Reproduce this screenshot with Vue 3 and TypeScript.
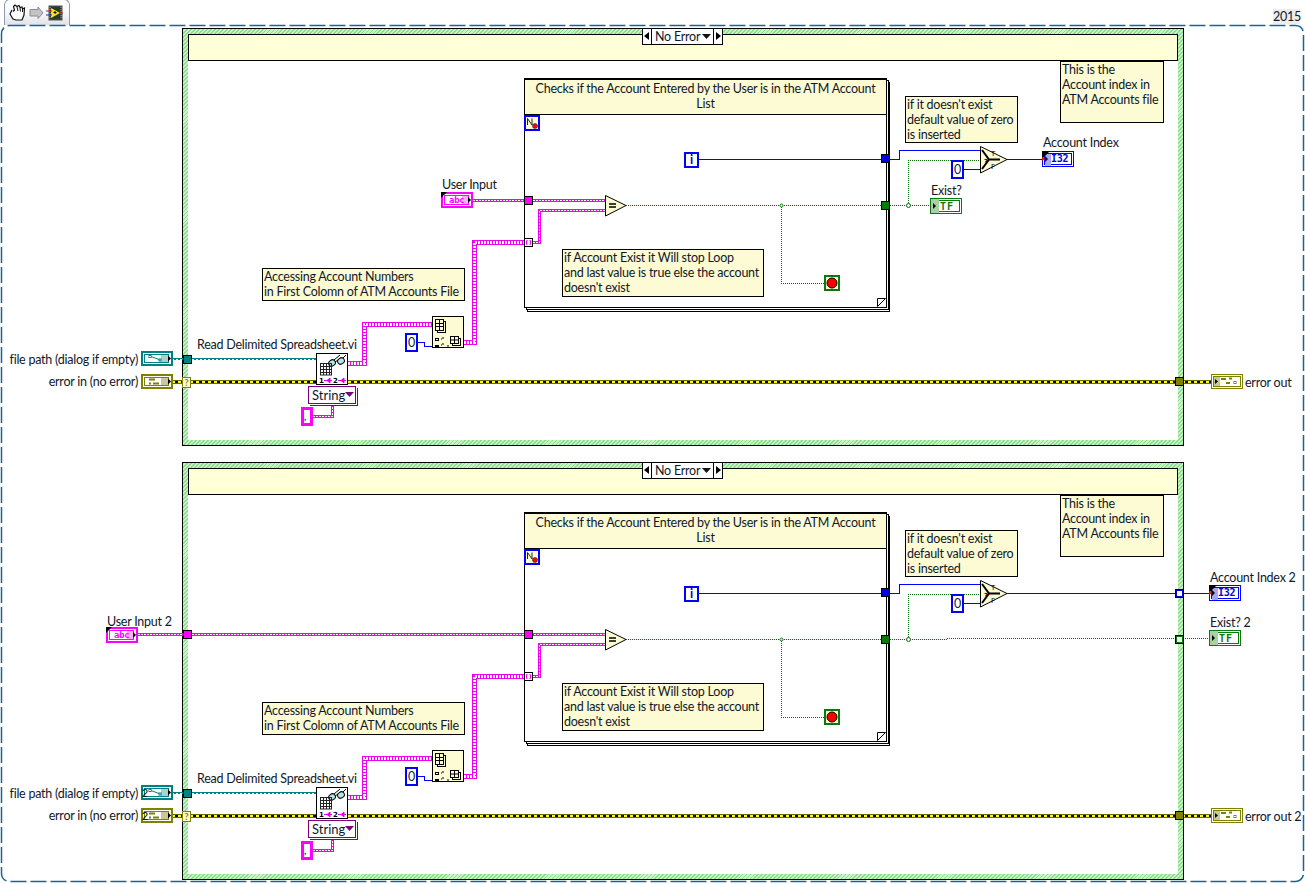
<template>
  <div class="page">
    <!-- toolbar tab -->
    <div class="tab">
      <svg width="66" height="25" viewBox="0 0 66 25">
        <path d="M8 10 L6 14 L9 19 L12 20 L18 20 L20 15 L20.5 8 L18.5 9 L18 7 L16 7.5 L15 5.5 L13 6.5 L11 5 L9.5 6.5 L10.5 10 L9 11.5" fill="#fff" stroke="#111" stroke-width="1.2" />
        <path d="M13 7 L14 11 M16 8 L16.5 11.5 M18.500 9 L18.500 12" stroke="#111" fill="none" />
        <path d="M26 9.500 H34 V7 L39 13 L34 18.500 V16 H26 Z" fill="#c4c4c4" stroke="#8c8c8c" />
        <rect x="45" y="6" width="13" height="14" fill="#2a3a2a" stroke="#555" />
        <path d="M46 7 V19 M57 7 V19" stroke="#aaa" stroke-dasharray="1 1" />
        <path d="M47 8 L56 13 L47 18 Z" fill="#f7e31d" />
        <path d="M42 11 H48 M55 13 H59" stroke="#d81818" />
        <path d="M42 15 H48" stroke="#1830d8" />
        <path d="M51 11 V14 M49.500 12.500 H52.500" stroke="#111" />
      </svg>
    </div>
    <div class="year">2015</div>

    <!-- dashed diagram border -->
    <svg class="bounds" width="1305" height="884">
      <rect x="1.5" y="25.500" width="1302" height="856" rx="8" fill="none" stroke="#1b6394" stroke-width="1.5" stroke-dasharray="16 4" />
    </svg>

    <div v-for="c in cases" :key="c.id" class="case" :class="'case-' + c.id">
      <!-- case structure frame -->
      <div class="frame"></div>
      <div class="band"></div>
      <div class="selector">
        <span class="sel-arrow">
          <svg width="8" height="14"><path d="M6 3 V11 L1 7 Z" fill="#000" /></svg>
        </span>
        <span class="sel-text">No Error</span>
        <svg class="sel-drop" width="9" height="6"><path d="M0 0 H9 L4.500 5 Z" fill="#111" /></svg>
        <span class="sel-arrow sel-arrow-right">
          <svg width="8" height="14"><path d="M2 3 V11 L7 7 Z" fill="#000" /></svg>
        </span>
      </div>

      <!-- while loop -->
      <div class="loop-back loop-back-2"></div>
      <div class="loop-back loop-back-1"></div>
      <div class="loop">
        <div class="loop-note">Checks if the Account Entered by the User is in the ATM Account<br />List</div>
      </div>
      <svg class="curl" width="9" height="9"><path d="M.5 .5 H8.500 L.5 8.500 Z" fill="#fff" stroke="#000" /></svg>

      <!-- wires -->
      <svg class="wires" width="1305" height="450">
        <g v-for="(w, i) in c.wires" :key="i" fill="none" shape-rendering="crispEdges">
          <path :d="w.d" :class="'wire-' + w.kind" />
          <path v-if="hasInner(w.kind)" :d="w.d" :class="'inner-' + w.kind" />
          <path v-if="w.kind === 'err'" :d="w.d" class="inner-err-2" />
        </g>
        <circle cx="781.500" cy="205.500" r="1.500" fill="#fff" stroke="#0b6b0b" />
        <circle cx="908.500" cy="205.500" r="2" fill="#fff" stroke="#0b6b0b" />
      </svg>

      <!-- comments -->
      <div class="note note-exist">if it doesn't exist<br />default value of zero<br />is inserted</div>
      <div class="note note-index">This is the<br />Account index in<br />ATM Accounts file</div>
      <div class="note note-stop">if Account Exist it Will stop Loop<br />and last value is true else the account<br />doesn't exist</div>
      <div class="note note-column">Accessing Account Numbers<br />in First Colomn of ATM Accounts File</div>

      <!-- loop terminals and primitives -->
      <svg class="node cond-n" width="16" height="16">
        <rect x="1" y="1" width="14" height="14" fill="#fdfbd3" stroke="#0000ff" stroke-width="2" />
        <path d="M3.500 10 V3.500 L8 10 V3.500" fill="none" stroke="#223" />
        <circle cx="11" cy="11" r="2.500" fill="#f00" stroke="#333" stroke-width=".6" />
      </svg>
      <div class="const-i">i</div>
      <svg class="node prim-eq" width="22" height="22">
        <path d="M.5 .5 L21 10.500 L.5 21 Z" fill="#fdfbd3" stroke="#000" />
        <path d="M4 9 H11 M4 12 H11" stroke="#000" stroke-width="1.500" />
      </svg>
      <svg class="node prim-sel" width="28" height="28">
        <path d="M.5 .5 L27 13.500 L.5 27 Z" fill="#fdfbd3" stroke="#000" />
        <path d="M2 4 L9 13.500 L2 23 M9 13.500 H20" fill="none" stroke="#000" stroke-width="2" />
        <text x="4" y="18" class="tiny bold">?</text>
        <text x="11" y="10" class="tiny">T</text>
        <text x="11" y="23" class="tiny">F</text>
      </svg>
      <div class="const-num num-sel">0</div>
      <svg class="node stop" width="16" height="16">
        <rect x="1" y="1" width="14" height="14" fill="#fdfbd3" stroke="#0a7a0a" stroke-width="2" />
        <circle cx="8" cy="8" r="5" fill="#f00" stroke="#000" />
      </svg>

      <!-- tunnels -->
      <div class="tunnel t-str-in"></div>
      <svg class="node t-idx" width="9" height="9">
        <rect x=".5" y=".5" width="8" height="8" fill="#fff" stroke="#000" />
        <path d="M3.500 2.500 H2.500 V6.500 H3.500 M5.500 2.500 H6.500 V6.500 H5.500" fill="none" stroke="#f0f" />
      </svg>
      <div class="tunnel t-i32-out"></div>
      <div class="tunnel t-bool-out"></div>
      <div v-if="c.id === 2" class="tunnel t-str-case"></div>
      <div v-if="c.id === 2" class="tunnel t-i32-case"></div>
      <div v-if="c.id === 2" class="tunnel t-bool-case"></div>
      <div class="tunnel t-path"></div>
      <div class="t-err-in">?</div>
      <div class="tunnel t-err-out"></div>

      <!-- read spreadsheet and index array -->
      <svg class="node read-vi" width="32" height="32">
        <rect x=".5" y=".5" width="31" height="31" fill="#fff" stroke="#000" />
        <g fill="#b6e4e4" stroke="#000">
          <ellipse cx="16" cy="10" rx="3.500" ry="3" transform="rotate(-35 16 10)" />
          <ellipse cx="25" cy="8" rx="3.500" ry="3" transform="rotate(-35 25 8)" />
        </g>
        <path d="M18 7 L24 2 M27 5 L30 2 M19 9 L22 7" stroke="#000" fill="none" />
        <path d="M4 10.500 H16 M4 13.500 H16 M4 16.500 H16 M4 19.500 H16 M4 22 H16 M4.500 10 V22 M7.500 10 V22 M10.500 10 V22 M13.500 10 V22 M15.500 10 V22" stroke="#222" fill="none" />
        <text x="3" y="30" class="tiny bold">1</text>
        <path d="M8 27.500 H16 M14 25 V30 L11 27.500 Z" stroke="#e000e0" fill="#e000e0" />
        <text x="17" y="30" class="tiny bold">2</text>
        <path d="M22 27.500 H30 M28 25 V30 L25 27.500 Z" stroke="#e000e0" fill="#e000e0" />
      </svg>
      <svg class="node idx-vi" width="32" height="32">
        <rect x=".5" y=".5" width="31" height="31" fill="#fdfbd3" stroke="#000" />
        <g fill="none" stroke="#000">
          <rect x="5.500" y="5.500" width="8" height="11" fill="#fdfbd3" />
          <rect x="3.500" y="3.500" width="8" height="11" fill="#fdfbd3" />
          <path d="M3.500 7.500 H11.500 M3.500 10.500 H11.500 M7.500 3.500 V14.500" />
          <rect x="20.500" y="22.500" width="8" height="7" fill="#fdfbd3" />
          <rect x="18.500" y="20.500" width="8" height="7" fill="#fdfbd3" />
          <path d="M18.500 24 H26.500 M22.500 20.500 V27.500" />
          <rect x="3.500" y="22.500" width="3" height="2" />
        </g>
        <rect x="3" y="29" width="4" height="2" fill="#000" />
        <path d="M9 23 H10 M11 21 V23 M9 29 H10 M11 27 V29 M16 31 V29" stroke="#000" />
      </svg>
      <div class="const-num num-idx">0</div>
      <div class="ring">
        <span>String</span>
        <svg width="9" height="6"><path d="M0 0 H9 L4.500 5 Z" fill="#800080" /></svg>
      </div>
      <div class="const-str"><span>,</span></div>

      <!-- front panel terminals -->
      <svg class="node term-path" width="32" height="15">
        <rect x="1" y="1" width="30" height="13" fill="#fff" stroke="#008080" stroke-width="2" />
        <rect x="3.500" y="3.500" width="24" height="8" fill="#fff" stroke="#008080" />
        <rect x="20" y="4" width="7" height="7" fill="#a6d2d2" />
        <path d="M27 4.500 L30 7.500 L27 10.500 Z" fill="#000" />
        <path d="M10 5.500 L18 8.500" stroke="#008080" fill="none" />
        <rect x="8" y="4.500" width="2" height="2" fill="none" stroke="#008080" />
        <rect x="18" y="8" width="2" height="2" fill="none" stroke="#008080" />
        <text v-if="c.id === 2" x="1" y="12" class="req">2</text>
      </svg>
      <svg class="node term-err" width="32" height="15">
        <rect x="1" y="1" width="30" height="13" fill="#fff" stroke="#7f7f00" stroke-width="2" />
        <rect x="3.500" y="3.500" width="24" height="8" fill="#fff" stroke="#7f7f00" />
        <rect x="20" y="4" width="7" height="7" fill="#c8c89a" />
        <path d="M27 4.500 L30 7.500 L27 10.500 Z" fill="#000" />
        <path d="M8 5.500 H14 M8 9.500 H10 M12 9.500 H18" stroke="#7f7f00" stroke-width="2" fill="none" />
        <text v-if="c.id === 2" x="1" y="12" class="req">2</text>
      </svg>
      <svg class="node term-err-out" width="32" height="15">
        <rect x=".5" y=".5" width="31" height="14" fill="#fff" stroke="#7f7f00" />
        <rect x="2.500" y="2.500" width="27" height="10" fill="#fff" stroke="#7f7f00" />
        <rect x="3" y="3" width="6" height="9" fill="#c8c89a" />
        <path d="M4 5 L7 7.500 L4 10 Z" fill="#000" />
        <path d="M10 5 H15 M18 4.500 H21 M15 9 H19" stroke="#7f7f00" stroke-width="2" fill="none" />
        <rect x="23" y="7.500" width="2" height="2" fill="none" stroke="#7f7f00" />
      </svg>
      <svg class="node term-str" :class="{ 'term-str-2': c.id === 2 }" width="32" height="16">
        <rect x="1" y="1" width="30" height="14" fill="#fff" stroke="#f0f" stroke-width="2" />
        <rect x="3.500" y="3.500" width="24" height="9" fill="#fff" stroke="#f0f" />
        <rect x="21" y="4" width="6" height="8" fill="#fbb0fb" />
        <path d="M27 5 L30 8 L27 11 Z" fill="#000" />
        <path d="M0 0 H6 L0 6 Z" fill="#000" />
        <text x="8" y="11" class="abc">abc</text>
      </svg>
      <svg class="node term-i32" :class="{ 'term-i32-2': c.id === 2 }" width="32" height="16">
        <rect x=".5" y=".5" width="31" height="15" fill="#fff" stroke="#0000ff" />
        <rect x="2.500" y="2.500" width="27" height="11" fill="#fff" stroke="#0000ff" />
        <rect x="3" y="3" width="6" height="12" fill="#a8a8f0" />
        <path d="M0 0 H8 L0 8 Z" fill="#000" />
        <path d="M0 6 L3 8 L0 10 Z" fill="#f00" />
        <path d="M3 5 L6 8 L3 11 Z" fill="#000" />
        <text x="9" y="11" class="i32">I32</text>
      </svg>
      <svg class="node term-tf" :class="{ 'term-tf-2': c.id === 2 }" width="32" height="16">
        <rect x=".5" y=".5" width="31" height="15" fill="#fff" stroke="#0a7a0a" />
        <rect x="2.500" y="2.500" width="27" height="11" fill="#fff" stroke="#0a7a0a" />
        <rect x="1" y="1" width="8" height="14" fill="#a8d0a8" />
        <path d="M3 5 L6 8 L3 11 Z" fill="#000" />
        <text x="10" y="11.500" class="tf">TF</text>
      </svg>

      <!-- labels -->
      <span class="label l-user" :class="{ 'l-user-2': c.id === 2 }">{{ c.userLabel }}</span>
      <span class="label l-read">Read Delimited Spreadsheet.vi</span>
      <span class="label l-file">file path (dialog if empty)</span>
      <span class="label l-errin">error in (no error)</span>
      <span class="label l-errout">{{ c.errLabel }}</span>
      <span class="label l-acct" :class="{ 'l-acct-2': c.id === 2 }">{{ c.acctLabel }}</span>
      <span class="label l-exist" :class="{ 'l-exist-2': c.id === 2 }">{{ c.existLabel }}</span>
    </div>
  </div>
</template>

<script setup lang="ts">
type Wire = { kind: 'str' | 'arr' | 'path' | 'err' | 'i32' | 'bool'; d: string };

// wires drawn the same in both case structures
const common: Wire[] = [
  { kind: 'i32', d: 'M698 159.500 H881' },
  { kind: 'i32', d: 'M890 159.500 H899.500 V150.500 H980' },
  { kind: 'i32', d: 'M964 169.500 H980' },
  { kind: 'i32', d: 'M417 342.500 H424.500 V346.500 H432' },
  { kind: 'bool', d: 'M626 205.500 H881' },
  { kind: 'bool', d: 'M781.500 205 V283.500 H824' },
  { kind: 'bool', d: 'M908.500 205 V160.500 H980' },
  { kind: 'str', d: 'M533 242.500 H539.500 V210.500 H605' },
  { kind: 'arr', d: 'M348 363.500 H364.500 V324.500 H432' },
  { kind: 'arr', d: 'M464 342.500 H474.500 V242.500 H524' },
  { kind: 'str', d: 'M313 416.500 H332.500 V406' },
  { kind: 'path', d: 'M172 359 H316' },
  { kind: 'err', d: 'M172 382 H316' },
  { kind: 'err', d: 'M348 382 H1211' },
];

const cases = [
  {
    id: 1,
    userLabel: 'User Input',
    errLabel: 'error out',
    acctLabel: 'Account Index',
    existLabel: 'Exist?',
    wires: [
      ...common,
      { kind: 'str', d: 'M473 200.500 H605' },
      { kind: 'i32', d: 'M1006 159.500 H1042' },
      { kind: 'bool', d: 'M890 205.500 H930' },
    ] as Wire[],
  },
  {
    id: 2,
    userLabel: 'User Input 2',
    errLabel: 'error out 2',
    acctLabel: 'Account Index 2',
    existLabel: 'Exist? 2',
    wires: [
      ...common,
      { kind: 'str', d: 'M138 200.500 H605' },
      { kind: 'i32', d: 'M1006 159.500 H1209' },
      { kind: 'bool', d: 'M890 205.500 H947 V204.500 H1209' },
    ] as Wire[],
  },
];

function hasInner(kind: string): boolean {
  return kind === 'str' || kind === 'arr' || kind === 'path' || kind === 'err';
}
</script>

<style>
html,
body {
  margin: 0;
  background: #fff;
  overflow: hidden;
}
</style>

<style scoped>
.page {
  position: relative;
  width: 1305px;
  height: 884px;
  overflow: hidden;
  background: #fff;
  font-family: Lato, "Open Sans", sans-serif;
  font-size: 12.5px;
  letter-spacing: -0.24px;
  color: #10182a;
}

.tab {
  position: absolute;
  left: 4px;
  top: -1px;
  width: 66px;
  height: 26px;
  box-sizing: border-box;
  border: 1px solid #8e9bb5;
  border-bottom: none;
  border-radius: 6px 6px 0 0;
  background: linear-gradient(#fff, #f6f7f9 55%, #dfe2e9);
}

.tab svg {
  display: block;
  margin: 0 0 0 -1px;
}

.year {
  position: absolute;
  left: 1273px;
  top: 9px;
  width: 27px;
  height: 15px;
  background: #ededed;
  line-height: 15px;
  text-align: center;
}

.bounds {
  position: absolute;
  left: 0;
  top: 0;
}

.case {
  position: absolute;
  left: 0;
  top: 0;
  width: 1305px;
  height: 450px;
}

.case-2 {
  top: 434px;
}

.frame {
  position: absolute;
  left: 182px;
  top: 28px;
  width: 1002px;
  height: 418px;
  box-sizing: border-box;
  border: 1px solid #000;
  background: repeating-linear-gradient(135deg, #8fdc8f 0 1.3px, #c6f6c6 1.3px 2.8px);
}

.frame::after {
  content: "";
  position: absolute;
  left: 5px;
  top: 5px;
  right: 5px;
  bottom: 5px;
  background: #fff;
}

.band {
  position: absolute;
  left: 188px;
  top: 34px;
  width: 990px;
  height: 27px;
  box-sizing: border-box;
  border: 1px solid #000;
  background: #ffffd8;
}

.selector {
  position: absolute;
  left: 642px;
  top: 28px;
  width: 81px;
  height: 17px;
  box-sizing: border-box;
  border: 1px solid #000;
  background: #fff;
  display: flex;
  align-items: center;
  white-space: nowrap;
}

.sel-arrow {
  width: 8px;
  height: 15px;
  border-right: 1px solid #000;
  display: flex;
}

.sel-arrow-right {
  border-right: none;
  border-left: 1px solid #000;
}

.sel-text {
  flex: 1;
  padding-left: 3px;
  line-height: 15px;
}

.sel-drop {
  margin-right: 2px;
}

.loop,
.loop-back {
  position: absolute;
  left: 524px;
  top: 78px;
  width: 363px;
  height: 230px;
  box-sizing: border-box;
  border: 1px solid #000;
  background: #fff;
}

.loop {
  border-top-width: 2px;
}

.loop-back-1 {
  left: 526px;
  top: 80px;
}

.loop-back-2 {
  left: 527px;
  top: 82px;
}

.loop-note {
  height: 35px;
  box-sizing: border-box;
  border-bottom: 1px solid #000;
  background: #fdfbd3;
  padding-top: 1px;
  text-align: center;
  line-height: 15px;
}

.curl {
  position: absolute;
  left: 877px;
  top: 298px;
}

.wires {
  position: absolute;
  left: 0;
  top: 0;
  overflow: visible;
}

.wire-i32 {
  stroke: #0000ff;
  stroke-width: 1;
}

.wire-bool {
  stroke: #0b6b0b;
  stroke-width: 1;
  stroke-dasharray: 1 1;
}

.wire-str {
  stroke: #f000f0;
  stroke-width: 3;
}

.inner-str {
  stroke: #fff;
  stroke-width: 1;
  stroke-dasharray: 2 1;
}

.wire-arr {
  stroke: #f000f0;
  stroke-width: 5;
}

.inner-arr {
  stroke: #fff;
  stroke-width: 3;
  stroke-dasharray: 2 1;
}

.wire-path {
  stroke: #008080;
  stroke-width: 2;
}

.inner-path {
  stroke: #fff;
  stroke-width: 1;
  stroke-dasharray: 2 2;
}

.wire-err {
  stroke: #6a6a00;
  stroke-width: 4;
}

.inner-err {
  stroke: #000;
  stroke-width: 2;
}

.inner-err-2 {
  stroke: #ff0;
  stroke-width: 2;
  stroke-dasharray: 3 3;
}

.note {
  position: absolute;
  box-sizing: border-box;
  border: 1px solid #000;
  background: #fdfbd3;
  padding: 0 0 0 1px;
  line-height: 15px;
  white-space: nowrap;
}

.note-exist {
  left: 905px;
  top: 96px;
  width: 113px;
  height: 47px;
}

.note-index {
  left: 1060px;
  top: 61px;
  width: 104px;
  height: 62px;
}

.note-stop {
  left: 562px;
  top: 249px;
  width: 202px;
  height: 48px;
}

.note-column {
  left: 262px;
  top: 268px;
  width: 203px;
  height: 33px;
}

.node {
  position: absolute;
  overflow: visible;
}

.cond-n {
  left: 524px;
  top: 115px;
}

.const-i {
  position: absolute;
  left: 684px;
  top: 152px;
  width: 15px;
  height: 16px;
  box-sizing: border-box;
  border: 2px solid #0000ff;
  background: #fffff0;
  color: #0000d0;
  text-align: center;
  font-weight: 700;
  line-height: 12px;
}

.prim-eq {
  left: 605px;
  top: 195px;
}

.prim-sel {
  left: 980px;
  top: 146px;
}

.const-num {
  position: absolute;
  box-sizing: border-box;
  border: 2px solid #0000ff;
  background: #fff;
  text-align: center;
  color: #222;
  line-height: 15px;
}

.num-sel {
  left: 951px;
  top: 160px;
  width: 13px;
  height: 19px;
}

.num-idx {
  left: 405px;
  top: 333px;
  width: 13px;
  height: 19px;
}

.stop {
  left: 824px;
  top: 275px;
}

.tunnel {
  position: absolute;
  width: 9px;
  height: 9px;
  box-sizing: border-box;
  border: 1px solid #000;
}

.t-str-in {
  left: 524px;
  top: 196px;
  background: #f0f;
}

.t-idx {
  left: 524px;
  top: 238px;
}

.t-i32-out {
  left: 881px;
  top: 154px;
  background: #0000e0;
}

.t-bool-out {
  left: 881px;
  top: 201px;
  background: #0a7a0a;
}

.t-str-case {
  left: 183px;
  top: 196px;
  background: #f0f;
}

.t-i32-case {
  left: 1175px;
  top: 155px;
  background: #fff;
  border: 2px solid #0000e0;
  outline: 1px solid #000;
  outline-offset: -1px;
}

.t-bool-case {
  left: 1175px;
  top: 201px;
  background: #fff;
  border: 2px solid #0a7a0a;
  outline: 1px solid #000;
  outline-offset: -1px;
}

.t-path {
  left: 183px;
  top: 355px;
  background: #008080;
}

.t-err-in {
  position: absolute;
  left: 182px;
  top: 377px;
  width: 9px;
  height: 11px;
  box-sizing: border-box;
  border: 1px solid #7f7f00;
  background: #fdfbd3;
  color: #7f7f00;
  font-size: 9px;
  font-weight: 700;
  line-height: 9px;
  text-align: center;
}

.t-err-out {
  left: 1175px;
  top: 377px;
  background: #7f7f00;
}

.read-vi {
  left: 316px;
  top: 353px;
}

.idx-vi {
  left: 432px;
  top: 316px;
}

.ring {
  position: absolute;
  left: 308px;
  top: 386px;
  width: 48px;
  height: 18px;
  box-sizing: border-box;
  border: 1px solid #800080;
  box-shadow: 1px 1px 0 #fff, 2px 2px 0 #800080;
  background: #fff;
  padding: 0 3px;
  line-height: 16px;
  display: flex;
  justify-content: space-between;
  align-items: center;
  font-size: 13px;
  letter-spacing: 0;
}

.ring svg {
  flex: none;
}

.const-str {
  position: absolute;
  left: 301px;
  top: 407px;
  width: 12px;
  height: 19px;
  box-sizing: border-box;
  border: 3px solid #f0f;
  background: #fff;
  font-size: 10px;
  font-weight: 700;
  line-height: 12px;
  color: #800080;
}

.term-path {
  left: 141px;
  top: 351px;
}

.term-err {
  left: 141px;
  top: 374px;
}

.term-err-out {
  left: 1211px;
  top: 374px;
}

.term-str {
  left: 441px;
  top: 192px;
}

.term-str-2 {
  left: 106px;
  top: 193px;
}

.term-i32 {
  left: 1042px;
  top: 151px;
}

.term-i32-2 {
  left: 1209px;
}

.term-tf {
  left: 930px;
  top: 198px;
}

.term-tf-2 {
  left: 1209px;
  top: 196px;
}

.tiny {
  font: 7px "DejaVu Sans", sans-serif;
  fill: #000;
}

.bold {
  font-weight: 700;
}

.req {
  font: 11px "Liberation Sans", sans-serif;
  fill: #000;
}

.abc {
  font: 700 9px "DejaVu Sans Mono", monospace;
  fill: #f0f;
}

.i32 {
  font: 700 10px "DejaVu Sans Mono", monospace;
  fill: #0000e0;
}

.tf {
  font: 700 10px "DejaVu Sans Mono", monospace;
  fill: #0a7a0a;
  letter-spacing: 1px;
}

.label {
  position: absolute;
  line-height: 15px;
  white-space: nowrap;
}

.l-user {
  left: 442px;
  top: 177px;
}

.l-user-2 {
  left: 107px;
  top: 180px;
}

.l-read {
  left: 197px;
  top: 337px;
}

.l-file {
  right: 1167px;
  top: 352px;
}

.l-errin {
  right: 1167px;
  top: 374px;
}

.l-errout {
  left: 1245px;
  top: 375px;
}

.l-acct {
  left: 1043px;
  top: 135px;
}

.l-acct-2 {
  left: 1210px;
  top: 136px;
}

.l-exist {
  left: 931px;
  top: 183px;
}

.l-exist-2 {
  left: 1210px;
  top: 181px;
}
</style>
